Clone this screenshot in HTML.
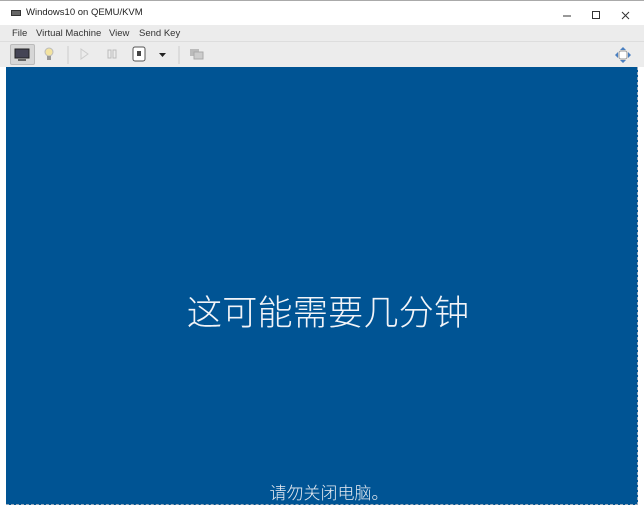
<!DOCTYPE html>
<html><head><meta charset="utf-8"><style>
*{margin:0;padding:0;box-sizing:border-box}
body{width:644px;height:509px;background:#fff;position:relative;overflow:hidden;font-family:"Liberation Sans","Noto Sans CJK SC",sans-serif}
.title{position:absolute;left:0;top:0;width:644px;height:25px;background:#fff;border-top:1px solid #aaa}
.title .t{position:absolute;left:26px;top:6px;font-size:9.5px;color:#222}
.title .ic{position:absolute;left:11px;top:9px;width:10px;height:6px;background:#666;border:1px solid #333}
.menu{position:absolute;left:0;top:25px;width:644px;height:16px;background:#ececec;font-size:9.5px;color:#333}
.menu span{position:absolute;top:3px}
.tb{position:absolute;left:0;top:41px;width:644px;height:26px;background:#ececec;border-top:1px solid #ddd}
.screen{position:absolute;left:6px;top:67px;width:632px;height:438px;background:#005494;border-right:1px dashed #9ab;border-bottom:1px dashed #9ab}
.big{position:absolute;left:0;width:656px;top:285px;text-align:center;color:#f2f4f8;font-size:35.3px;font-weight:300;font-family:"Noto Sans CJK SC",sans-serif}
.small{position:absolute;left:0;width:658px;top:479px;text-align:center;color:#e8ecf2;font-size:17px;font-weight:300;font-family:"Noto Sans CJK SC",sans-serif}
</style></head><body>
<div class="title"><div class="ic"></div><div class="t">Windows10 on QEMU/KVM</div>
<svg style="position:absolute;left:560px;top:8px" width="80" height="12"><line x1="3" y1="7" x2="11" y2="7" stroke="#333"/><rect x="32.5" y="2.5" width="7" height="7" fill="none" stroke="#333"/><path d="M62 3l7 7M69 3l-7 7" stroke="#333"/></svg></div>
<div class="menu"><span style="left:12px">File</span><span style="left:36px">Virtual Machine</span><span style="left:109px">View</span><span style="left:139px">Send Key</span></div>
<div class="tb">
<div style="position:absolute;left:10px;top:2px;width:25px;height:21px;background:#d6d6d6;border:1px solid #bbb;border-radius:2px"></div>
<svg style="position:absolute;left:0;top:0" width="220" height="26"><rect x="15" y="7" width="14" height="9" fill="#445" stroke="#222"/><rect x="18" y="17" width="8" height="2" fill="#666"/>
<circle cx="49" cy="10" r="4" fill="#f3e3a0" stroke="#bbb"/><rect x="47" y="14" width="4" height="4" fill="#999"/>
<line x1="68" y1="4" x2="68" y2="22" stroke="#ccc"/>
<path d="M81 7l7 5-7 5z" fill="none" stroke="#ccc"/>
<rect x="108" y="8" width="3" height="8" fill="none" stroke="#bbb"/><rect x="113" y="8" width="3" height="8" fill="none" stroke="#bbb"/>
<rect x="133" y="5" width="12" height="14" rx="2" fill="#fff" stroke="#555"/><rect x="137" y="9" width="4" height="5" fill="#444"/>
<path d="M159 11h7l-3.5 4z" fill="#222"/>
<line x1="179" y1="4" x2="179" y2="22" stroke="#ccc"/>
<rect x="190" y="7" width="9" height="7" fill="#bbb"/><rect x="194" y="10" width="9" height="7" fill="#ccc" stroke="#aaa"/></svg>
<svg style="position:absolute;left:614px;top:4px" width="18" height="18"><path d="M9 1l3 3H6zM9 17l3-3H6zM1 9l3-3v6zM17 9l-3-3v6z" fill="#4a7fc0"/><rect x="5" y="5" width="8" height="8" rx="2" fill="#fff" stroke="#999"/></svg>
</div>
<div class="screen"></div>
<div class="big">这可能需要几分钟</div>
<div class="small">请勿关闭电脑。</div>
</body></html>
